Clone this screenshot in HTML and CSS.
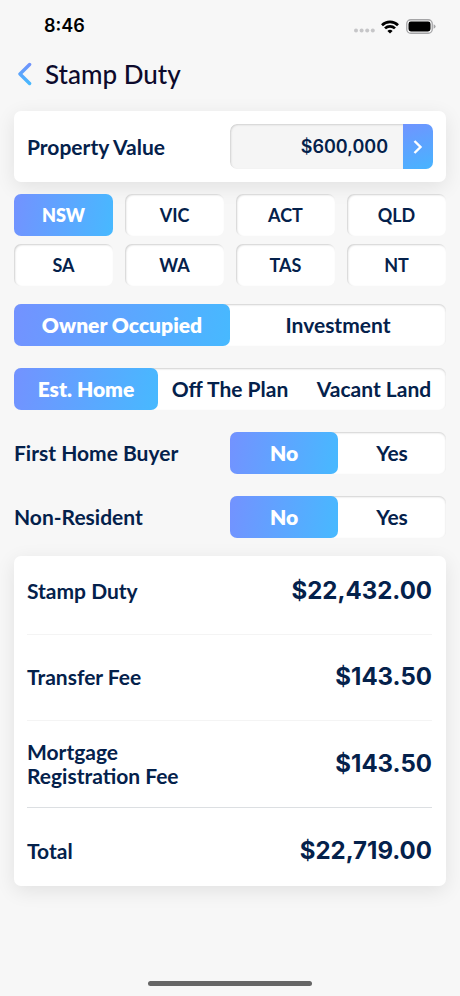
FILE: index.html
```html
<!DOCTYPE html>
<html lang="en">
<head>
<meta charset="utf-8">
<meta name="viewport" content="width=device-width, initial-scale=1">
<title>Stamp Duty</title>
<link rel="stylesheet" href="styles.css">
</head>

<body>
<div class="status-bar">
  <span class="time">8:46</span>
  <div class="status-icons">
    <svg width="22" height="6" viewBox="0 0 22 6" fill="#c6c6c8">
      <circle cx="3" cy="2.5" r="2"/><circle cx="8.6" cy="2.5" r="2"/><circle cx="14.2" cy="2.5" r="2"/><circle cx="19.8" cy="2.5" r="2"/>
    </svg>
    <svg class="wifi" width="18" height="14" viewBox="0 0 18 14" fill="none" stroke="#000" stroke-width="2.7">
      <path d="M1 5.2a11.4 11.4 0 0 1 16 0"/>
      <path d="M4 8.4a7.2 7.2 0 0 1 10 0"/>
      <path d="M9 13.6l-2.6-2.7a3.8 3.8 0 0 1 5.2 0z" fill="#000" stroke="none"/>
    </svg>
    <svg class="battery" width="30" height="15" viewBox="0 0 30 15">
      <rect x="0.75" y="0.75" width="25.5" height="13.5" rx="4" fill="none" stroke="#a5a5a7" stroke-width="1.3"/>
      <rect x="2.5" y="2.5" width="22" height="10" rx="2.4"/>
      <path d="M27.6 5.2q2 .7 2 2.3t-2 2.3z" fill="#a5a5a7"/>
    </svg>
  </div>
</div>

<header class="header">
  <button class="back" type="button" aria-label="Back">
    <svg width="14" height="24" viewBox="0 0 14 24" fill="none" stroke="url(#blue)" stroke-width="3.4" stroke-linecap="round" stroke-linejoin="round">
      <defs>
        <linearGradient id="blue" x1="0" y1="0" x2="0" y2="1">
          <stop offset="0" stop-color="#6f92fb"/>
          <stop offset="1" stop-color="#47b8fe"/>
        </linearGradient>
      </defs>
      <path d="M11.6 2.5L2 12l9.6 9.5"/>
    </svg>
  </button>
  <h1>Stamp Duty</h1>
</header>

<main>
  <form class="calculator">
    <div class="card value-card">
      <label for="value">Property Value</label>
      <div class="value-field">
        <input id="value" type="text" inputmode="numeric" value="$600,000">
        <button type="button" aria-label="Next">
          <svg width="10" height="16" viewBox="0 0 10 16" fill="none" stroke="#fff" stroke-width="2.4">
            <path d="M1.5 2l6 6-6 6"/>
          </svg>
        </button>
      </div>
    </div>

    <div class="states" role="radiogroup" aria-label="State">
      <label class="option"><input type="radio" name="state" checked><span>NSW</span></label>
      <label class="option"><input type="radio" name="state"><span>VIC</span></label>
      <label class="option"><input type="radio" name="state"><span>ACT</span></label>
      <label class="option"><input type="radio" name="state"><span>QLD</span></label>
      <label class="option"><input type="radio" name="state"><span>SA</span></label>
      <label class="option"><input type="radio" name="state"><span>WA</span></label>
      <label class="option"><input type="radio" name="state"><span>TAS</span></label>
      <label class="option"><input type="radio" name="state"><span>NT</span></label>
    </div>

    <div class="choices">
      <div class="segment" role="radiogroup" aria-label="Purpose">
        <label class="option"><input type="radio" name="purpose" checked><span>Owner Occupied</span></label>
        <label class="option"><input type="radio" name="purpose"><span>Investment</span></label>
      </div>

      <div class="segment" role="radiogroup" aria-label="Property type">
        <label class="option"><input type="radio" name="type" checked><span>Est. Home</span></label>
        <label class="option"><input type="radio" name="type"><span>Off The Plan</span></label>
        <label class="option"><input type="radio" name="type"><span>Vacant Land</span></label>
      </div>

      <div class="question">
        <span id="first-home">First Home Buyer</span>
        <div class="segment" role="radiogroup" aria-labelledby="first-home">
          <label class="option"><input type="radio" name="first" checked><span>No</span></label>
          <label class="option"><input type="radio" name="first"><span>Yes</span></label>
        </div>
      </div>

      <div class="question">
        <span id="non-resident">Non-Resident</span>
        <div class="segment" role="radiogroup" aria-labelledby="non-resident">
          <label class="option"><input type="radio" name="resident" checked><span>No</span></label>
          <label class="option"><input type="radio" name="resident"><span>Yes</span></label>
        </div>
      </div>
    </div>
  </form>

  <div class="card results">
    <table>
      <tr><th scope="row">Stamp Duty</th><td>$22,432.00</td></tr>
      <tr><th scope="row">Transfer Fee</th><td>$143.50</td></tr>
      <tr><th scope="row">Mortgage<br>Registration Fee</th><td>$143.50</td></tr>
      <tr class="total"><th scope="row">Total</th><td>$22,719.00</td></tr>
    </table>
  </div>
</main>

<div class="home-indicator"></div>
</body>
</html>
```

FILE: styles.css
```css
* {
  box-sizing: border-box;
}

body {
  margin: 0;
  min-height: 100vh;
  display: flex;
  flex-direction: column;
  background: #f7f7f7;
  color: #04214b;
  font-family: Lato, "Open Sans", sans-serif;
  font-size: 21px;
  font-weight: 700;
  line-height: 24px;
}

button,
input {
  font: inherit;
  color: inherit;
  border: 0;
  padding: 0;
  margin: 0;
}

/* status bar */
.status-bar {
  display: flex;
  justify-content: space-between;
  align-items: center;
  height: 52px;
  padding: 0 24px 0 44px;
}

.time {
  color: #000;
  font-family: Inter, sans-serif;
  font-size: 18px;
  font-weight: 600;
}

.status-icons {
  display: flex;
  align-items: flex-end;
}

.wifi {
  margin: 0 7px 0 6px;
}

/* header */
.header {
  display: flex;
  align-items: center;
  gap: 13px;
  height: 44px;
  padding: 0 18px;
}

.back {
  display: flex;
  background: none;
}

h1 {
  margin: 0;
  color: #0d0a2c;
  font-size: 26px;
  font-weight: 500;
  line-height: 32px;
}

main {
  padding: 15px 14px 24px;
}

.card {
  background: #fff;
  border-radius: 7px;
  box-shadow: 0 5px 20px rgba(0, 0, 0, 0.09);
}

.value-card {
  display: flex;
  justify-content: space-between;
  align-items: center;
  padding: 13px;
}

.value-field {
  display: flex;
  width: 50%;
  height: 45px;
  border-radius: 7px;
  overflow: hidden;
}

.value-field input {
  flex: 1;
  min-width: 0;
  padding-right: 15px;
  background: #f5f5f5;
  border-radius: 7px 0 0 7px;
  box-shadow: inset 1px 1px 2px #d0d0d0;
  font-family: Inter, sans-serif;
  font-size: 18px;
  font-weight: 600;
  text-align: right;
}

.value-field button {
  display: flex;
  align-items: center;
  justify-content: center;
  width: 30px;
  background: linear-gradient(160deg, #7094ff, #47b4ff);
}

/* radio options drawn as buttons */
.option {
  position: relative;
  flex: 1;
}

.option input {
  position: absolute;
  inset: 0;
  opacity: 0;
}

.option span {
  display: flex;
  align-items: center;
  justify-content: center;
  height: 42px;
  border-radius: 7px;
  white-space: nowrap;
}

.option input:checked + span {
  background: linear-gradient(100deg, #7392ff, #47b9ff);
  box-shadow: none;
  color: #fff;
  font-weight: 800;
}

.states {
  display: grid;
  grid-template-columns: repeat(4, 1fr);
  gap: 8px 12px;
  margin-top: 12px;
  font-size: 18px;
}

.states span {
  background: #fff;
  box-shadow: inset 1px 1px 2px #d0d0d0;
}

.choices {
  display: flex;
  flex-direction: column;
  gap: 22px;
  margin: 18px 0;
}

.segment {
  display: flex;
  background: #fff;
  border-radius: 7px;
  box-shadow: inset 0 1px 2px #d0d0d0;
}

.segment .option {
  flex: 1 1 0;
}

.question {
  display: grid;
  grid-template-columns: 1fr 1fr;
  align-items: center;
}

/* results */
.results {
  padding: 0 14px 0 13px;
}

table {
  width: 100%;
  border-collapse: collapse;
}

th,
td {
  height: 86px;
  padding: 0;
  border-bottom: 1px solid #f4f4f4;
}

th {
  text-align: left;
}

td {
  font-family: Inter, sans-serif;
  font-size: 24px;
  font-weight: 700;
  text-align: right;
}

tr:first-child th,
tr:first-child td {
  height: 78px;
  padding-bottom: 8px;
}

tr:nth-child(3) th,
tr:nth-child(3) td {
  height: 87px;
  border-bottom-color: #dcdfe2;
}

.total th,
.total td {
  height: 79px;
  padding-top: 8px;
  border: 0;
}

.home-indicator {
  width: 164px;
  height: 5px;
  margin: auto auto 10px;
  border-radius: 3px;
  background: #666;
}
```
